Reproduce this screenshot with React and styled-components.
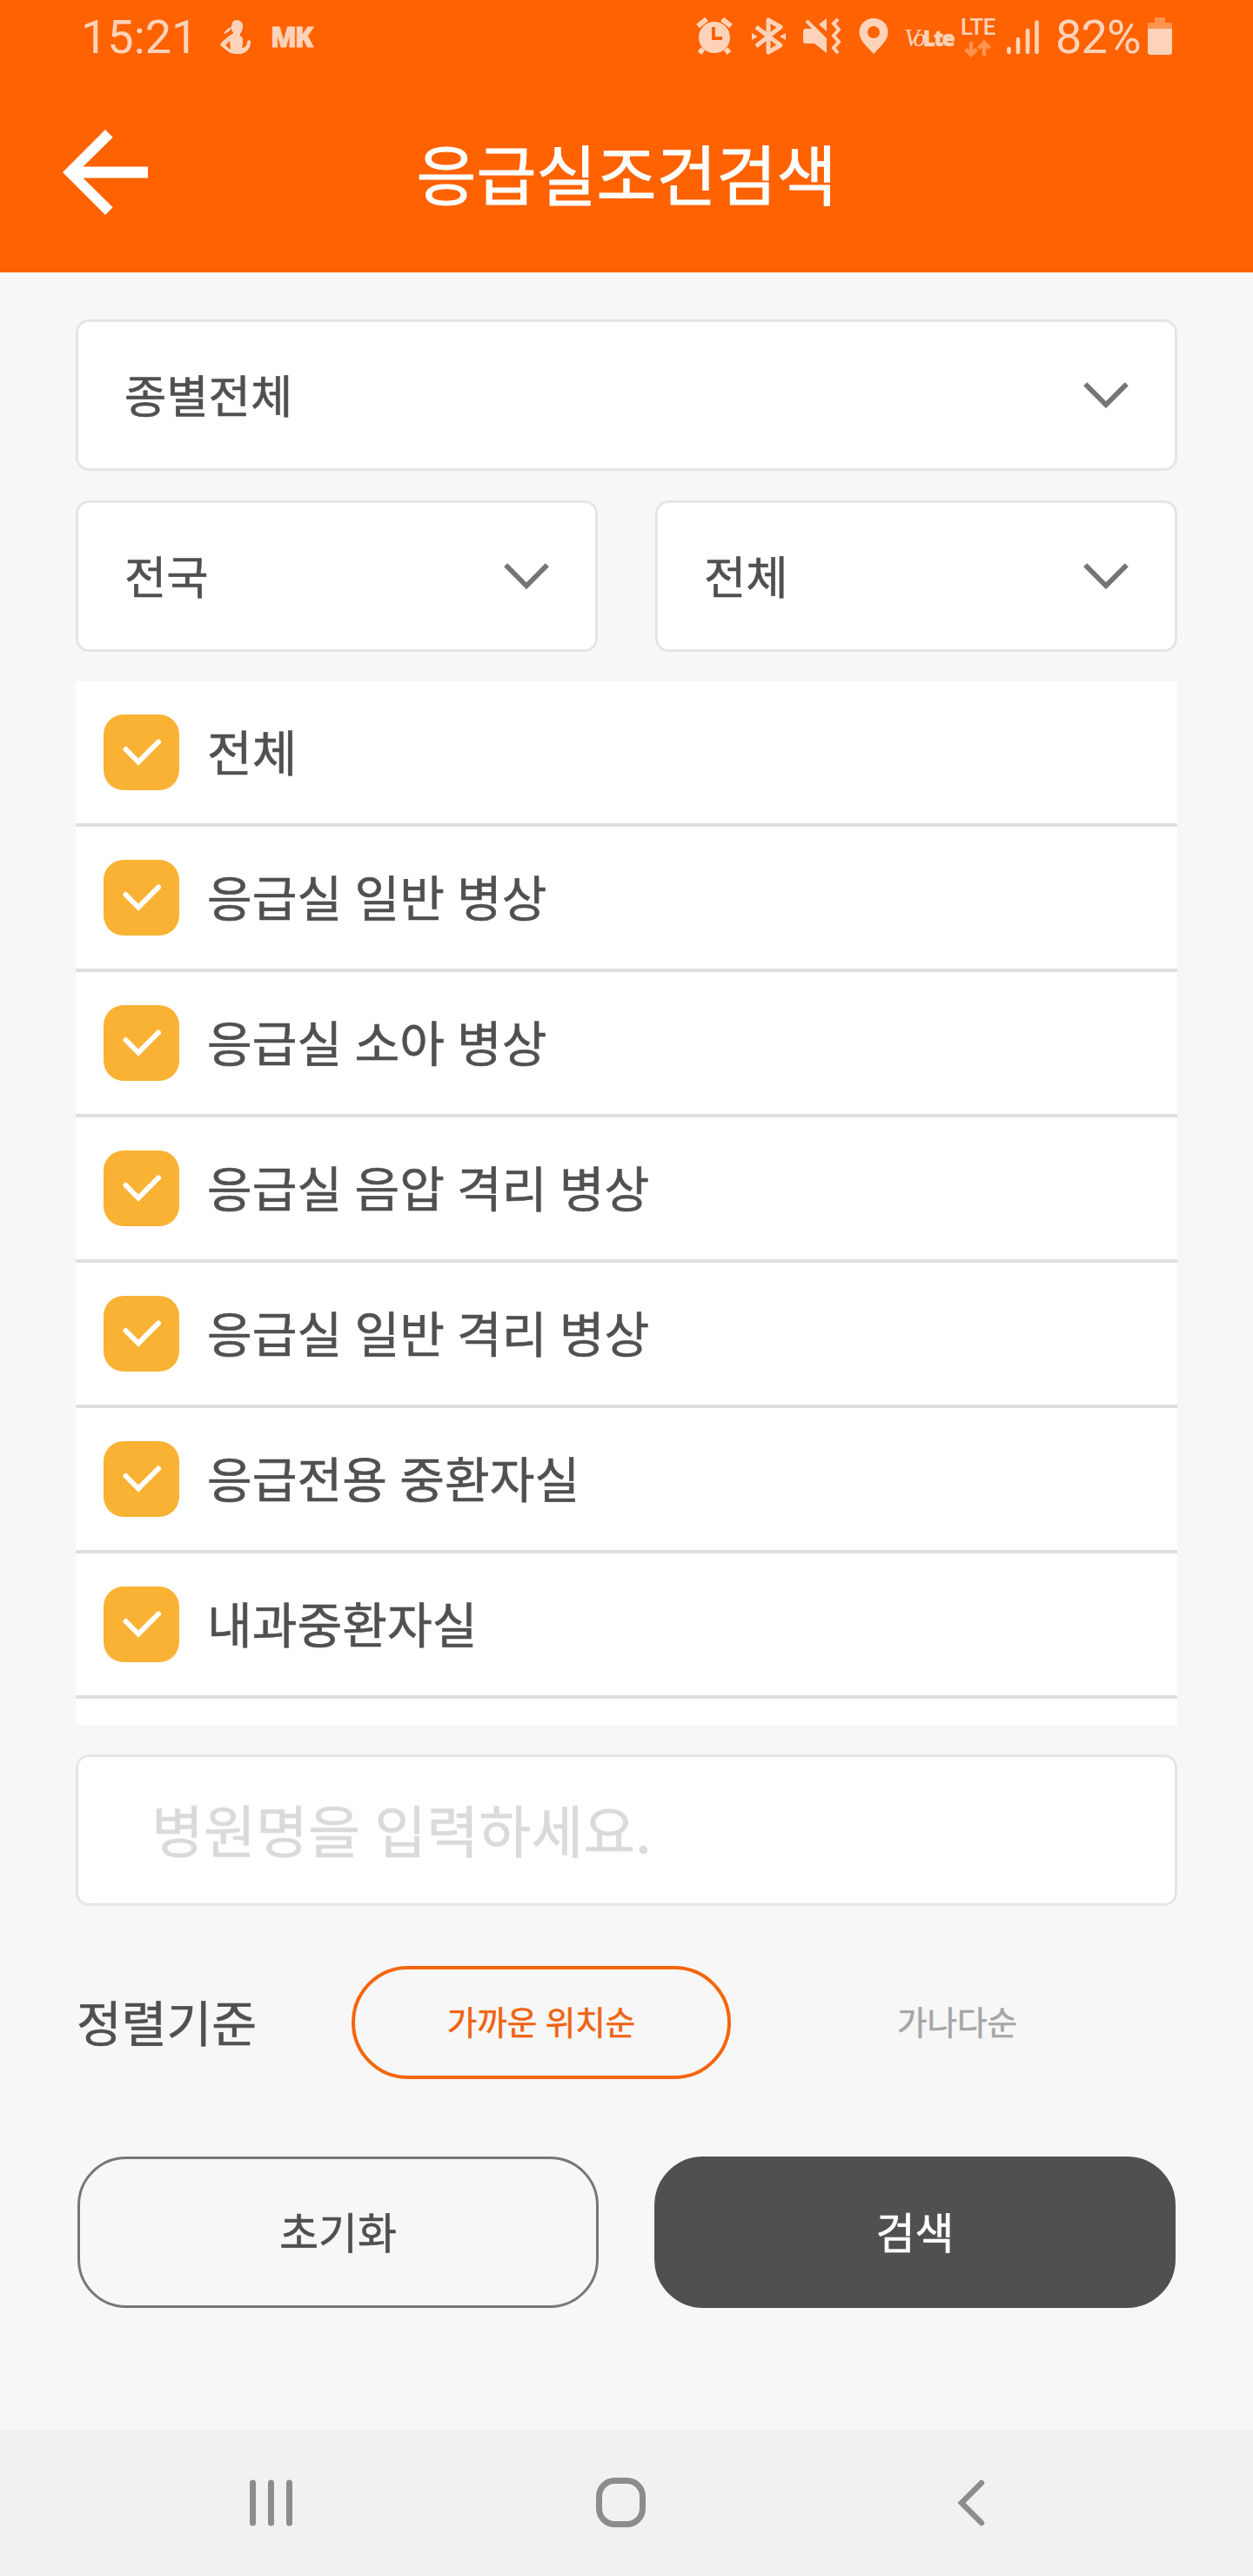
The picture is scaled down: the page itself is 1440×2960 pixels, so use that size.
import React, { useState } from 'react'
import styled, { createGlobalStyle } from 'styled-components'

const GlobalStyle = createGlobalStyle`
    * {
        box-sizing: border-box;
    }

    body {
        margin: 0;
        background: #f7f7f7;
        font-family: "Noto Sans CJK KR", sans-serif;
        color: #505050;
    }

    svg {
        display: block;
        flex: none;
    }
`

const Screen = styled.div`
    width: 1440px;
    height: 2960px;
    display: flex;
    flex-direction: column;
    background: #f7f7f7;
`

const Header = styled.header`
    height: 313px;
    background: #ff6200;
`

const StatusBar = styled.div`
    height: 90px;
    padding: 0 93px 0 93px;
    display: flex;
    justify-content: space-between;
    color: #ffd3ba;
    font-family: Roboto, sans-serif;
`

const StatusGroup = styled.div`
    display: flex;
    align-items: flex-start;

    svg {
        fill: currentColor;
    }
`

const IconGap = styled.div`
    display: flex;
    gap: 20px;
`

const Clock = styled.span`
    width: 160px;
    font-size: 54px;
    line-height: 86px;
`

const Carrier = styled.span`
    margin-left: 22px;
    font-family: "Open Sans", sans-serif;
    font-size: 31px;
    font-weight: 800;
    line-height: 84px;
    letter-spacing: -2px;
    -webkit-text-stroke: 0.8px currentColor;
`

const Volte = styled.span`
    width: 57px;
    margin-left: 18px;
    display: flex;
    align-items: baseline;
    line-height: 87px;
    white-space: nowrap;

    i {
        width: 25px;
        font-family: "Liberation Serif", serif;
        font-size: 29px;
        letter-spacing: -4px;
    }

    b {
        font-family: "Open Sans", sans-serif;
        font-size: 24px;
        font-weight: 800;
        letter-spacing: -1.5px;
        -webkit-text-stroke: 0.6px currentColor;
    }
`

const Network = styled.span`
    width: 42px;
    margin-left: 7px;
    padding-top: 17px;
    display: flex;
    flex-direction: column;
    align-items: center;
    font-size: 26px;
    font-weight: 500;
    line-height: 29px;
    letter-spacing: -0.5px;
`

const Percent = styled.span`
    width: 106px;
    margin-left: 15px;
    font-size: 54px;
    line-height: 86px;
    letter-spacing: -0.8px;
    white-space: nowrap;
`

const TitleBar = styled.div`
    height: 223px;
    padding: 0 72px;
    display: grid;
    grid-template-columns: 98px 1fr 98px;
    align-items: center;

    svg {
        margin-top: -7px;
    }

    h1 {
        margin: 0;
        padding-bottom: 8px;
        font-size: 75px;
        font-weight: 400;
        line-height: 100px;
        text-align: center;
        color: #fff;
        -webkit-text-stroke: 1px currentColor;
    }
`

const Content = styled.main`
    flex: 1;
    padding: 54px 87px 0;
    display: flex;
    flex-direction: column;
`

// lifts the glyphs a little so they sit on the optical centre of their box
const Text = styled.span`
    padding-bottom: 4px;
    line-height: 1;
    white-space: nowrap;
    word-spacing: 0.028em;
    -webkit-text-stroke: 0.6px currentColor;
`

const SelectRow = styled.div`
    display: flex;
    gap: 66px;
    margin-bottom: 34px;
`

const SelectBox = styled.div`
    flex: 1;
    height: 174px;
    padding: 0 53px 0 53px;
    display: flex;
    align-items: center;
    justify-content: space-between;
    background: #fff;
    border: 3px solid #e5e5e5;
    border-radius: 15px;
    font-size: 52.5px;
`

const BedList = styled.ul`
    height: 1199px;
    margin: 0 0 34px;
    padding: 0;
    overflow: hidden;
    list-style: none;
    background: #fff;
`

const BedRow = styled.li`
    height: 167px;
    padding-left: 32px;
    display: flex;
    align-items: center;
    gap: 32px;
    border-bottom: 4px solid #dfdfdf;
    font-size: 56.25px;
`

const CheckBox = styled.span`
    width: 87px;
    height: 87px;
    border-radius: 23px;
    background: ${props => props.$checked ? '#f9b234' : '#e5e5e5'};
`

const SearchField = styled.div`
    height: 174px;
    padding-left: 84px;
    display: flex;
    align-items: center;
    background: #fff;
    border: 3px solid #e5e5e5;
    border-radius: 15px;
    font-size: 65.2px;
    color: #dadada;
`

const SortRow = styled.div`
    height: 130px;
    margin: 69px 0 89px;
    display: flex;
    align-items: center;
`

const SortLabel = styled.label`
    width: 317px;
    padding-left: 1px;
    display: flex;
    flex: none;
    font-size: 56.25px;
`

const SortOption = styled.div`
    flex: none;
    width: 436px;
    height: 130px;
    margin-right: 42px;
    display: flex;
    align-items: center;
    justify-content: center;
    border: 4px solid ${props => props.$active ? '#f4660c' : 'transparent'};
    border-radius: 65px;
    color: ${props => props.$active ? '#ee6414' : '#a6a6a6'};
    font-size: 37.5px;

    &:last-child {
        margin-right: 0;
    }
`

const ButtonRow = styled.div`
    padding: 0 2px;
    display: flex;
    gap: 64px;
`

const Button = styled.div`
    flex: 1;
    height: 174px;
    display: flex;
    align-items: center;
    justify-content: center;
    border: 3px solid ${props => props.$filled ? '#505050' : '#777'};
    border-radius: 56px;
    background: ${props => props.$filled ? '#505050' : 'transparent'};
    color: ${props => props.$filled ? '#fff' : '#505050'};
    font-size: 48.75px;
`

const NavBar = styled.nav`
    height: 168px;
    padding: 0 308px 1px 286px;
    display: grid;
    grid-template-columns: 399px 415px 32px;
    align-items: center;
    background: #f1f1f1;
`

const BedTypes = [
    "전체",
    "응급실 일반 병상",
    "응급실 소아 병상",
    "응급실 음압 격리 병상",
    "응급실 일반 격리 병상",
    "응급전용 중환자실",
    "내과중환자실",
]

const SortTypes = ["가까운 위치순", "가나다순"]

function Chevron() {
    return (
        <svg width="52" height="31" viewBox="0 0 52 31">
            <path d="M2.2 2.2L26 26.200 49.800 2.200" fill="none" stroke="#757575" strokeWidth="5.8" />
        </svg>
    )
}

function Select({ label }) {
    return (
        <SelectBox>
            <Text>{label}</Text>
            <Chevron />
        </SelectBox>
    )
}

function StatusIcons() {
    return (
        <>
            {/* alarm */}
            <svg width="46" height="90" viewBox="0 0 46 90">
                <path fillRule="evenodd" d="M23 25a18 18 0 1 0 0 36 18 18 0 0 0 0-36zM20 31h4v11h8v4H20z" />
                <path d="M4 30l10-8M42 30l-10-8M10 56l-4 5M36 56l4 5" stroke="currentColor" strokeWidth="6" />
            </svg>
            {/* bluetooth */}
            <svg width="39" height="90" viewBox="0 0 39 90">
                <path d="M5 31L33 52 19 60V23l14 8L5 53" fill="none" stroke="currentColor" strokeWidth="5" strokeLinejoin="round" />
                <path d="M0 38l7 4-7 4zM39 38l-7 4 7 4z" />
            </svg>
            {/* mute + vibrate */}
            <svg width="44" height="90" viewBox="0 0 44 90">
                <path d="M3 33H13L27 45v16L13 50H3q-3 0-3-3V36q0-3 3-3zM27 21v15L18 28z" />
                <path d="M4 24l22 22" stroke="currentColor" strokeWidth="4" />
                <path d="M40 22l-5 5 6 7-6 7 6 7-6 7 5 6" fill="none" stroke="currentColor" strokeWidth="4" />
            </svg>
            {/* location */}
            <svg width="34" height="90" viewBox="0 0 34 90">
                <path fillRule="evenodd" d="M17 21C7.500 21 0.500 28 0.500 37c0 10 9 16 16.500 25 7.500-9 16.500-15 16.500-25 0-9-7-16-16.500-16zM17 30a7 7 0 1 1 0 14 7 7 0 0 1 0-14z" />
            </svg>
        </>
    )
}

function App() {
    const [checked, setChecked] = useState(BedTypes.map(() => true))
    const [sort, setSort] = useState(0)

    const toggle = index => setChecked(checked.map((value, i) => i === index ? !value : value))

    return (
        <Screen>
            <GlobalStyle />
            <Header>
                <StatusBar>
                    <StatusGroup>
                        <Clock>15:21</Clock>
                        <svg width="36" height="90" viewBox="0 0 36 90">
                            <path d="M19 23c4 0 7 3 7 7 0 5-2 7-3 9v2c4 2 3 6 3 9l-1 5c4 0 6-3 6-7 1-3 5-2 4 1 0 7-6 13-13 13-7 0-9 0-13-3L0 52c1-4 7-8 12-12 2-1 3-1 3-3-2-1-2-3-2-5-2 4-5 6-9 7 3-5 5-7 9-8 0-5 2-8 6-8zM11 47l-5 5 6 5z" fillRule="evenodd" />
                        </svg>
                        <Carrier>MK</Carrier>
                    </StatusGroup>
                    <StatusGroup>
                        <IconGap>
                            <StatusIcons />
                        </IconGap>
                        <Volte><i>Vo</i><b>Lte</b></Volte>
                        <Network>
                            LTE
                            <svg width="32" height="20" viewBox="0 0 32 20">
                                <path d="M8 2v15M1.500 10.500L8 17l6.500-6.500M23 18V3M16.500 9.500L23 3l6.500 6.500" fill="none" stroke="#ff9450" strokeWidth="4.500" />
                            </svg>
                        </Network>
                        <svg width="53" height="90" viewBox="0 0 53 90">
                            <path d="M14.500 56v4M25 45v15M36 35v25M46.500 25.500v34.500" stroke="currentColor" strokeWidth="4.600" strokeLinecap="round" />
                        </svg>
                        <Percent>82%</Percent>
                        <svg width="28" height="90" viewBox="0 0 28 90">
                            <path d="M8 20h12v6h6q2 0 2 2v6H0v-6q0-2 2-2h6z" fill="#ff9450" />
                            <path d="M0 33h28v27q0 3-3 3H3q-3 0-3-3z" />
                        </svg>
                    </StatusGroup>
                </StatusBar>
                <TitleBar>
                    <svg width="98" height="98" viewBox="4 4 16 16">
                        <path d="M20 10.920H7.830l5.590-5.510L12 4l-8 8 8 8 1.410-1.410L7.830 13.080H20z" fill="#fff" />
                    </svg>
                    <h1>응급실조건검색</h1>
                </TitleBar>
            </Header>
            <Content>
                <SelectRow>
                    <Select label="종별전체" />
                </SelectRow>
                <SelectRow>
                    <Select label="전국" />
                    <Select label="전체" />
                </SelectRow>
                <BedList>
                    {
                        BedTypes.map((name, index) => (
                            <BedRow key={name} onClick={() => toggle(index)}>
                                <CheckBox $checked={checked[index]}>
                                    <svg width="87" height="87" viewBox="0 0 87 87">
                                        <path d="M25.500 40L40 54.500 63 31.500" fill="none" stroke="#fff" strokeWidth="6" strokeLinecap="round" />
                                    </svg>
                                </CheckBox>
                                <Text>{name}</Text>
                            </BedRow>
                        ))
                    }
                </BedList>
                <SearchField>
                    <Text>병원명을 입력하세요.</Text>
                </SearchField>
                <SortRow>
                    <SortLabel>
                        <Text>정렬기준</Text>
                    </SortLabel>
                    {
                        SortTypes.map((name, index) => (
                            <SortOption key={name} $active={sort === index} onClick={() => setSort(index)}>
                                <Text>{name}</Text>
                            </SortOption>
                        ))
                    }
                </SortRow>
                <ButtonRow>
                    <Button>
                        <Text>초기화</Text>
                    </Button>
                    <Button $filled>
                        <Text>검색</Text>
                    </Button>
                </ButtonRow>
            </Content>
            <NavBar>
                <svg width="51" height="54" viewBox="0 0 51 54">
                    <path d="M4.500 4v46M25.500 4v46M46.500 4v46" stroke="#8c8c8c" strokeWidth="7" strokeLinecap="round" />
                </svg>
                <svg width="57" height="57" viewBox="0 0 57 57">
                    <rect x="3.500" y="3.500" width="50" height="50" rx="18" fill="none" stroke="#8c8c8c" strokeWidth="7" />
                </svg>
                <svg width="32" height="54" viewBox="0 0 32 54">
                    <path d="M28 4L5 27l23 23" fill="none" stroke="#8c8c8c" strokeWidth="6.500" strokeLinecap="round" />
                </svg>
            </NavBar>
        </Screen>
    )
}

export default App
